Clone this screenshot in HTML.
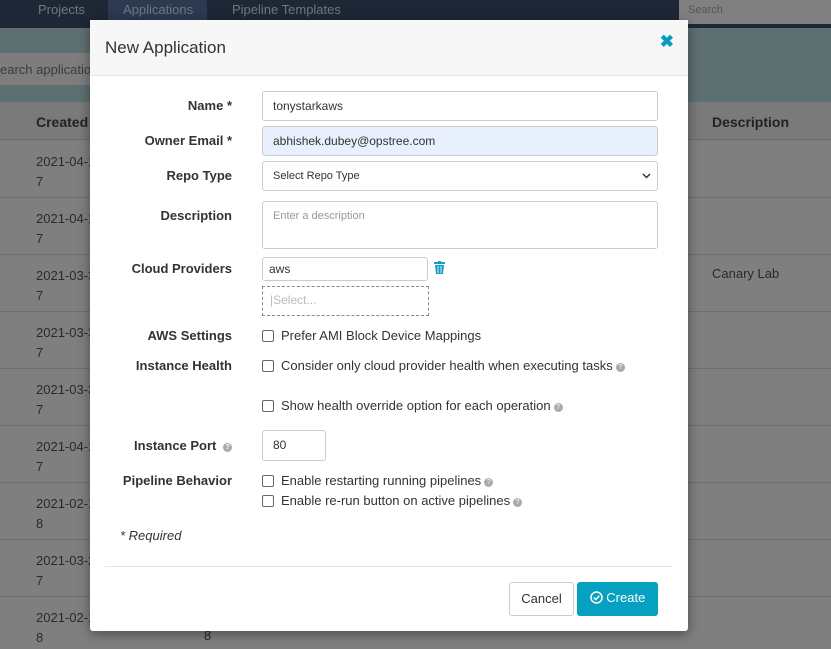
<!DOCTYPE html>
<html><head><style>
*{box-sizing:border-box}
html,body{margin:0;width:831px;height:649px;overflow:hidden}
body{background:#7f7f7f;font-family:"Liberation Sans",sans-serif;position:relative;color:#2a2a2a}
.nav{position:absolute;left:0;top:0;width:831px;height:28px;background:#1e2736}
.nav span{position:absolute;top:2px;font-size:13px;color:#6e7683}
.navsel{position:absolute;left:108px;top:0;width:99px;height:28px;background:#2b3a50}
.srch{position:absolute;left:679px;top:0;width:152px;height:24px;background:#808080;color:#555;font-size:11px;padding:4px 9px}
.strip{position:absolute;left:0;top:28px;width:831px;height:74px;background:#5e6f72}
.sbox{position:absolute;left:-10px;top:53px;width:110px;height:32px;background:#7d7d7d;border-radius:3px;font-size:13px;color:#3c3c3c;padding:9px 10px;white-space:nowrap;overflow:hidden}
.thead{position:absolute;left:0;top:102px;width:831px;height:38px;background:#7a7a7a;border-bottom:1px solid #6a6a6a;font-weight:bold;font-size:14px;color:#222}
.row{position:absolute;left:0;width:831px;height:57px;border-bottom:1px solid #6f6f6f;font-size:13px;color:#2a2a2a}
.row div{position:absolute;left:36px;top:11px;line-height:20px}
.modal{position:absolute;left:90px;top:20px;width:598px;height:611px;background:#fff;border-radius:3px;box-shadow:0 3px 12px rgba(0,0,0,.4)}
.mh{height:56px;background:#f7f7f7;border-bottom:1px solid #e5e5e5;position:relative}
.mh h1{margin:0;position:absolute;left:15px;top:18px;font-size:17px;font-weight:normal;color:#333}
.x{position:absolute;right:14px;top:12px;color:#0a9cc0;font-size:17px;font-weight:bold}
.lbl{position:absolute;width:142px;text-align:right;font-size:13px;font-weight:bold;color:#333;left:0}
.inp{position:absolute;left:172px;width:396px;border:1px solid #ccc;border-radius:3px;font-size:12px;color:#333;padding:0 10px;background:#fff}
.cb{position:absolute;left:172px;font-size:13px;color:#333;white-space:nowrap}
.cb i{display:inline-block;width:12px;height:12px;border:1px solid #666;border-radius:2px;vertical-align:-2px;margin-right:7px}
.q{display:inline-block;width:9px;height:9px;border-radius:50%;background:#aaa;color:#fff;font-size:7px;text-align:center;line-height:9px;font-style:normal;vertical-align:1px;margin-left:3px}
.btn{position:absolute;top:562px;height:34px;border-radius:3px;font-size:13px;line-height:32px;text-align:center}
</style></head><body>
<div class="nav"><div class="navsel"></div><span style="left:38px">Projects</span><span style="left:123px">Applications</span><span style="left:232px">Pipeline Templates</span><div class="srch">Search</div></div>
<div class="strip"></div><div class="sbox">earch applicatio</div>
<div class="thead"><span style="position:absolute;left:36px;top:12px">Created</span><span style="position:absolute;left:712px;top:12px">Description</span></div>
<div class="row" style="top:141px"><div>2021-04-1<br>7</div></div>
<div class="row" style="top:198px"><div>2021-04-1<br>7</div></div>
<div class="row" style="top:255px"><div>2021-03-3<br>7</div><span style="position:absolute;left:712px;top:11px;font-size:13px">Canary Lab</span></div>
<div class="row" style="top:312px"><div>2021-03-3<br>7</div></div>
<div class="row" style="top:369px"><div>2021-03-3<br>7</div></div>
<div class="row" style="top:426px"><div>2021-04-1<br>7</div></div>
<div class="row" style="top:483px"><div>2021-02-1<br>8</div></div>
<div class="row" style="top:540px"><div>2021-03-2<br>7</div></div>
<div class="row" style="top:597px"><div>2021-02-1<br>8</div><span style="position:absolute;left:204px;top:31px;font-size:13px">8</span></div>

<div class="modal">
<div class="mh"><h1>New Application</h1><span class="x">✖</span></div>
<div class="lbl" style="top:78px">Name *</div>
<div class="inp" style="top:71px;height:30px;line-height:28px">tonystarkaws</div>
<div class="lbl" style="top:113px">Owner Email *</div>
<div class="inp" style="top:106px;height:30px;line-height:28px;background:#e8f0fe">abhishek.dubey@opstree.com</div>
<div class="lbl" style="top:148px">Repo Type</div>
<div class="inp" style="top:141px;height:30px;line-height:28px;font-size:11px">Select Repo Type<svg style="position:absolute;right:6px;top:11px" width="9" height="6" viewBox="0 0 9 6"><path d="M1 1l3.5 3.5L8 1" stroke="#333" stroke-width="1.5" fill="none"/></svg></div>
<div class="lbl" style="top:188px">Description</div>
<div class="inp" style="top:181px;height:48px;line-height:28px;color:#999;font-size:11px">Enter a description</div>
<div class="lbl" style="top:241px">Cloud Providers</div>
<div class="inp" style="top:237px;width:166px;height:24px;line-height:22px;padding:0 6px">aws</div>
<svg style="position:absolute;left:344px;top:241px" width="11" height="13" viewBox="0 0 11 13"><rect x="0" y="1" width="11" height="2" fill="#1a9cc8"/><rect x="4" y="0" width="3" height="1.5" fill="#1a9cc8"/><path d="M1 4h9l-1 9H2z" fill="#1a9cc8"/><path d="M4 5v7M7 5v7" stroke="#fff" stroke-width=".8"/></svg>
<div class="inp" style="top:266px;width:167px;height:30px;border:1px dashed #888;border-radius:0;line-height:26px;color:#bbb;padding:0 7px">|Select...</div>
<div class="lbl" style="top:308px">AWS Settings</div>
<div class="cb" style="top:308px"><i></i>Prefer AMI Block Device Mappings</div>
<div class="lbl" style="top:338px">Instance Health</div>
<div class="cb" style="top:338px"><i></i>Consider only cloud provider health when executing tasks<span class="q">?</span></div>
<div class="cb" style="top:378px"><i></i>Show health override option for each operation<span class="q">?</span></div>
<div class="lbl" style="top:418px">Instance Port <span class="q">?</span></div>
<div class="inp" style="top:410px;width:64px;height:31px;line-height:29px">80</div>
<div class="lbl" style="top:453px">Pipeline Behavior</div>
<div class="cb" style="top:453px"><i></i>Enable restarting running pipelines<span class="q">?</span></div>
<div class="cb" style="top:473px"><i></i>Enable re-run button on active pipelines<span class="q">?</span></div>
<div style="position:absolute;left:30px;top:508px;font-size:13px;font-style:italic;color:#333">* Required</div>
<div style="position:absolute;left:15px;top:546px;width:568px;border-top:1px solid #e5e5e5"></div>
<div class="btn" style="left:419px;width:65px;border:1px solid #ccc;color:#333">Cancel</div>
<div class="btn" style="left:487px;width:81px;background:#06a0c0;color:#fff"><svg width="13" height="13" viewBox="0 0 13 13" style="vertical-align:-2px"><circle cx="6.5" cy="6.5" r="5.5" stroke="#fff" stroke-width="1.5" fill="none"/><path d="M3.8 6.6l2 2 3.5-3.8" stroke="#fff" stroke-width="1.5" fill="none"/></svg> Create</div>
</div>
</body></html>
